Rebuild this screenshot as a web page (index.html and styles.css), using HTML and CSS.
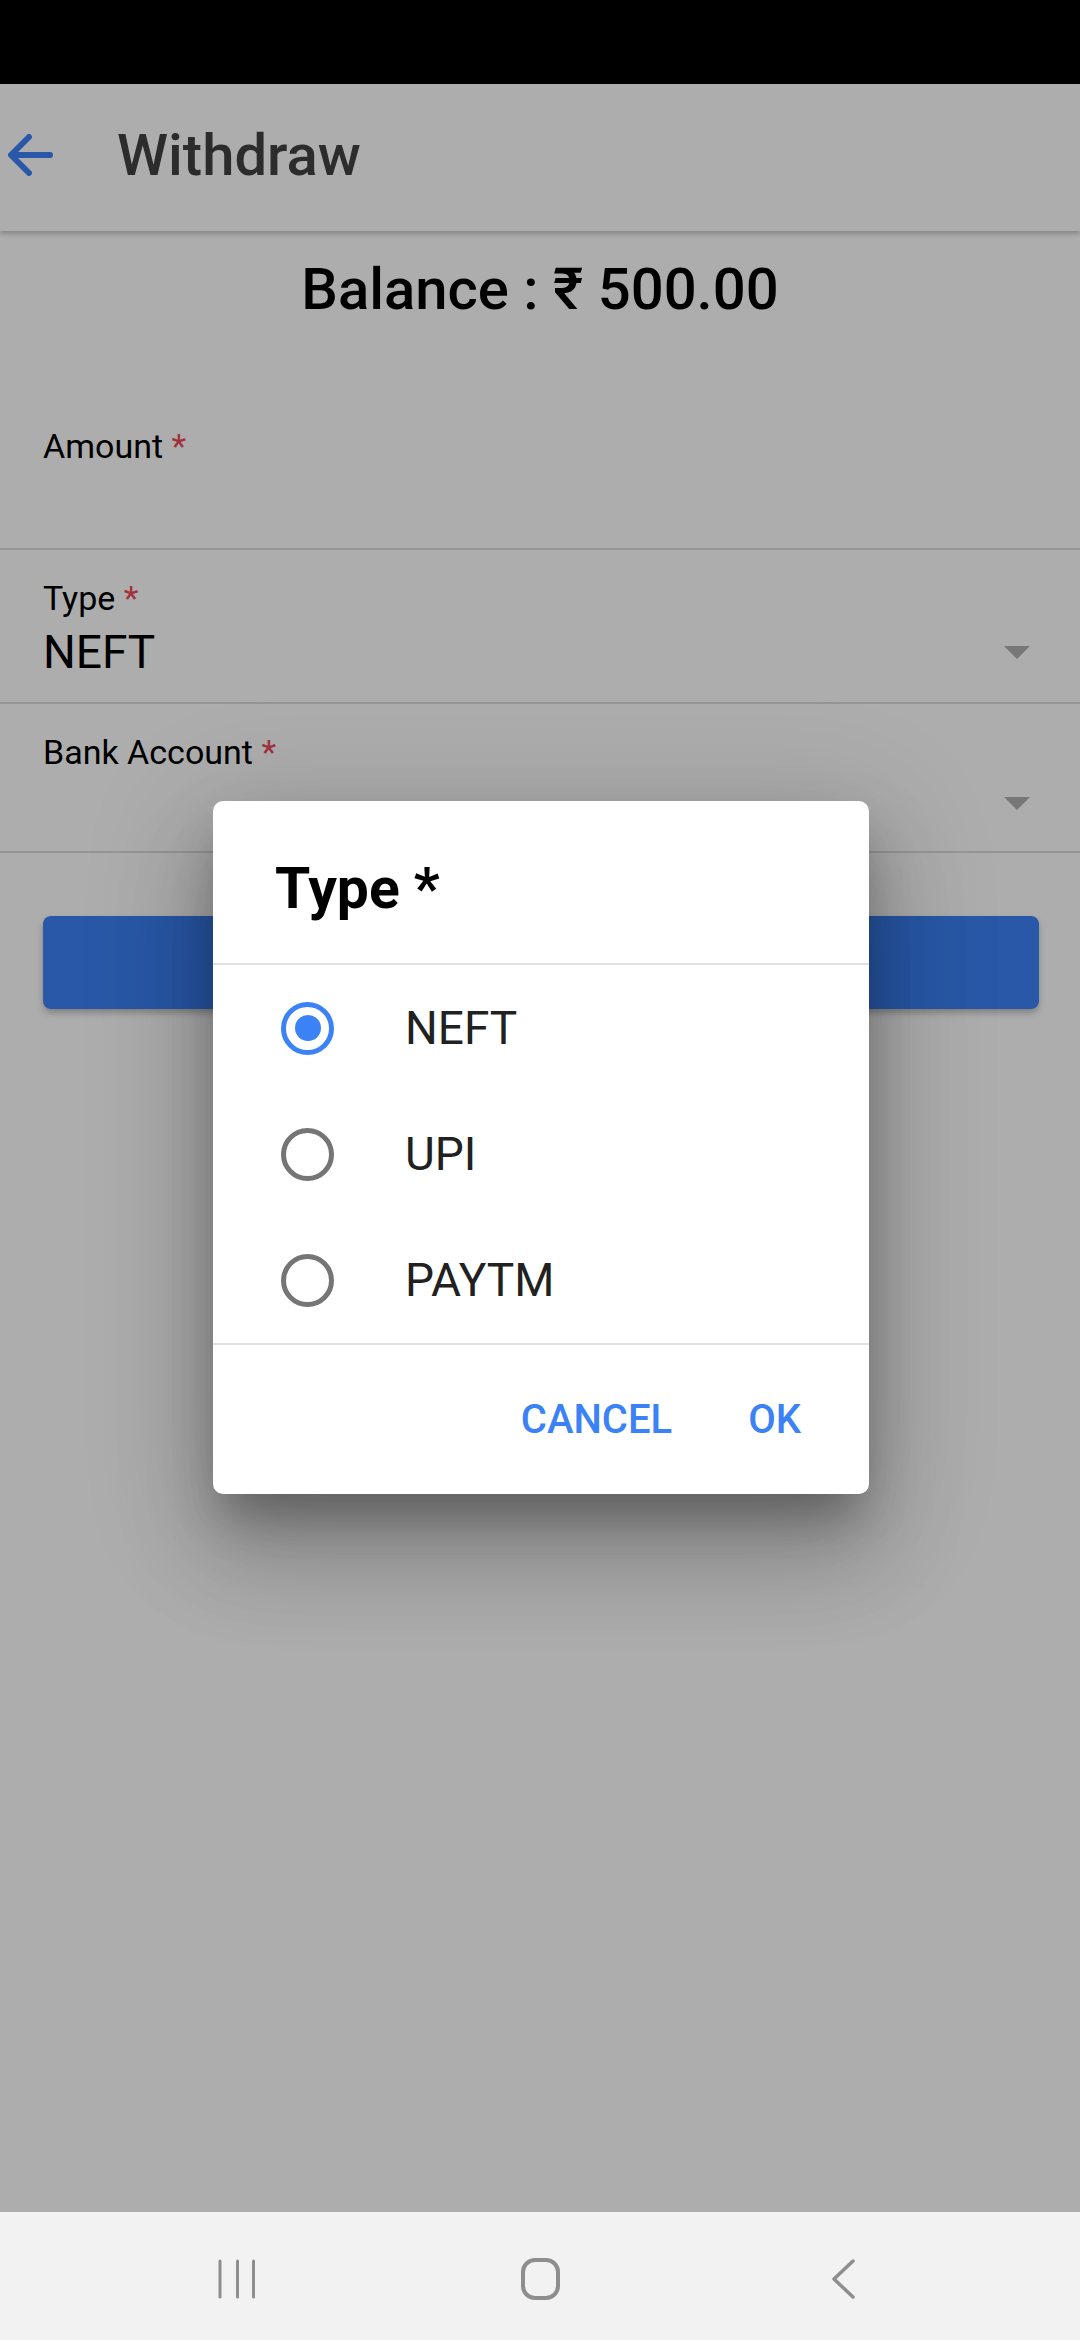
FILE: index.html
```html
<!DOCTYPE html>
<html lang="en">
<head>
<meta charset="utf-8">
<title>Withdraw</title>
<link rel="stylesheet" href="styles.css">
</head>
<body>
<div class="device">
  <div class="statusbar"></div>
  <div class="screen">
    <header class="appbar">
      <svg class="back" viewBox="76 88 360 336" width="45" height="42"><path d="M244 400L100 256l144-144M120 256h292" fill="none" stroke="#3b82f6" stroke-width="48" stroke-linecap="round" stroke-linejoin="round"/></svg>
      <h1 class="title">Withdraw</h1>
    </header>
    <div class="balance">Balance : ₹ 500.00</div>
    <form class="form">
      <div class="field field--amount">
        <div class="label">Amount <span class="req">*</span></div>
        <div class="value"></div>
      </div>
      <div class="field field--type">
        <div class="label">Type <span class="req">*</span></div>
        <div class="value"><span>NEFT</span><span class="caret"></span></div>
      </div>
      <div class="field field--bank">
        <div class="label">Bank Account <span class="req">*</span></div>
        <div class="value"><span></span><span class="caret"></span></div>
      </div>
    </form>
    <button class="submit" type="button">WITHDRAW</button>

    <div class="scrim"></div>
    <div class="dialog">
      <div class="dlg-title">Type *</div>
      <div class="dlg-list">
        <div class="opt"><span class="radio radio--on"><span class="dot"></span></span><span class="opt-text">NEFT</span></div>
        <div class="opt"><span class="radio"></span><span class="opt-text">UPI</span></div>
        <div class="opt"><span class="radio"></span><span class="opt-text">PAYTM</span></div>
      </div>
      <div class="dlg-actions">
        <span class="dlg-btn">CANCEL</span>
        <span class="dlg-btn">OK</span>
      </div>
    </div>
  </div>
  <nav class="navbar">
    <div class="slot">
      <svg width="40" height="40" viewBox="0 0 40 40"><g stroke="#8e8e8e" stroke-width="3" stroke-linecap="round"><line x1="3" y1="2" x2="3" y2="38"/><line x1="20.5" y1="2" x2="20.5" y2="38"/><line x1="36.5" y1="2" x2="36.5" y2="38"/></g></svg>
    </div>
    <div class="slot">
      <svg width="39" height="42" viewBox="0 0 39 42"><rect x="2" y="2" width="35" height="38" rx="12" fill="none" stroke="#8e8e8e" stroke-width="4"/></svg>
    </div>
    <div class="slot">
      <svg width="24" height="40" viewBox="0 0 24 40"><polyline points="22,2 3,20 22,38" fill="none" stroke="#8e8e8e" stroke-width="3.5" stroke-linecap="round" stroke-linejoin="round"/></svg>
    </div>
  </nav>
</div>
</body>
</html>
```

FILE: styles.css
```css
* { box-sizing: border-box; }
html, body {
  margin: 0;
  padding: 0;
}
body {
  width: 1080px;
  height: 2340px;
  overflow: hidden;
  font-family: Roboto, "Noto Sans", "DejaVu Sans", sans-serif;
  background: #000;
}
.device {
  display: flex;
  flex-direction: column;
  height: 2340px;
}
.statusbar {
  flex: none;
  height: 84px;
  background: #000;
}
.screen {
  position: relative;
  flex: 1;
  background: #fff;
  overflow: hidden;
}

/* app bar */
.appbar {
  position: relative;
  z-index: 1;
  height: 147px;
  display: flex;
  align-items: center;
  padding: 0 0 6px 8px;
  background: #fff;
  box-shadow: 0 3px 5px rgba(0, 0, 0, 0.22);
}
.back { flex: none; display: block; }
.title {
  margin: 0 0 0 64px;
  font-size: 58px;
  font-weight: 500;
  line-height: 68px;
  color: #424242;
}

/* balance */
.balance {
  padding-top: 24px;
  text-align: center;
  font-size: 58px;
  font-weight: 500;
  line-height: 68px;
  color: #000;
}

/* form */
.form {
  margin: 75px 0 0;
}
.field {
  padding: 28px 50px 23px 43px;
  border-bottom: 2px solid #dedede;
}
.field--amount { padding-bottom: 21px; }
.label {
  font-size: 34px;
  line-height: 40px;
  color: #000;
}
.req { color: #ee4b5a; }
.value {
  margin-top: 7px;
  height: 54px;
  display: flex;
  align-items: center;
  justify-content: space-between;
  font-size: 46px;
  line-height: 54px;
  color: #000;
}
.field--bank .value { height: 49px; }
.caret {
  width: 0;
  height: 0;
  border-left: 13.5px solid transparent;
  border-right: 13.5px solid transparent;
  border-top: 13px solid #b0b0b0;
}

.submit {
  display: block;
  width: 996px;
  height: 93px;
  margin: 63px 0 0 43px;
  border: none;
  border-radius: 8px;
  background: #3b82f6;
  color: #fff;
  font-family: inherit;
  font-size: 40px;
  font-weight: 500;
  box-shadow: 0 4px 6px rgba(0, 0, 0, 0.25);
}

/* scrim + dialog */
.scrim {
  position: absolute;
  inset: 0;
  z-index: 2;
  background: rgba(0, 0, 0, 0.32);
}
.dialog {
  position: absolute;
  z-index: 3;
  left: 213px;
  top: 717px;
  width: 656px;
  background: #fff;
  border-radius: 10px;
  box-shadow: 0 60px 95px 8px rgba(0, 0, 0, 0.16),
              0 24px 120px 20px rgba(0, 0, 0, 0.13),
              0 30px 45px -10px rgba(0, 0, 0, 0.28);
}
.dlg-title {
  padding: 54px 62px 41px;
  font-size: 57px;
  font-weight: 700;
  line-height: 67px;
  color: #000;
  border-bottom: 2px solid #e0e0e0;
}
.opt {
  height: 126px;
  display: flex;
  align-items: center;
  gap: 71px;
  padding-left: 68px;
}
.radio {
  flex: none;
  width: 53px;
  height: 53px;
  border: 5px solid #757575;
  border-radius: 50%;
  display: flex;
  align-items: center;
  justify-content: center;
}
.radio--on { border-color: #3b82f6; }
.dot {
  width: 26px;
  height: 26px;
  border-radius: 50%;
  background: #3b82f6;
}
.opt-text {
  font-size: 46px;
  line-height: 54px;
  color: #212121;
}
.dlg-actions {
  height: 151px;
  display: flex;
  justify-content: flex-end;
  align-items: center;
  gap: 76px;
  padding-right: 68px;
  border-top: 2px solid #e0e0e0;
}
.dlg-btn {
  font-size: 40px;
  font-weight: 500;
  line-height: 48px;
  color: #3b82f6;
}

/* system nav bar */
.navbar {
  flex: none;
  height: 128px;
  padding-top: 6px;
  background: #f2f2f2;
  display: flex;
  justify-content: center;
  align-items: center;
  gap: 183px;
}
.slot {
  width: 120px;
  display: flex;
  justify-content: center;
  align-items: center;
}
.slot svg { display: block; }
```
